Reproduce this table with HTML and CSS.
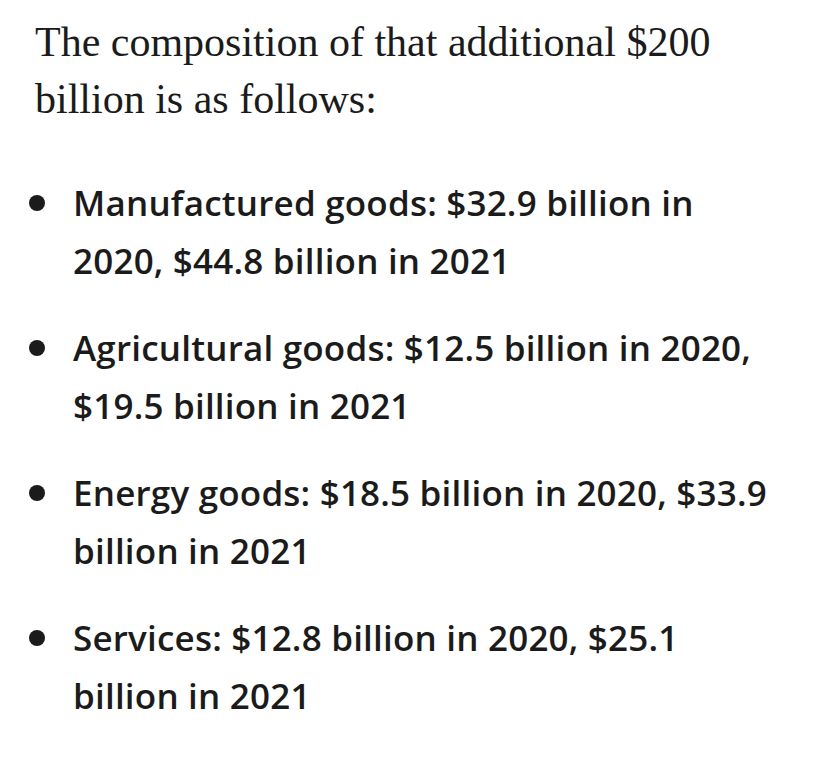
FILE: index.html
```html
<!DOCTYPE html>
<html lang="en">
<head>
<meta charset="utf-8">
<title>Composition</title>
<link rel="stylesheet" href="styles.css">
</head>
<body>
<main class="article">
  <p class="lead">The composition of that additional $200 billion is as follows:</p>
  <ul class="facts">
    <li class="fact"><span class="fact-text">Manufactured goods: $32.9 billion in<br>2020, $44.8 billion in 2021</span></li>
    <li class="fact"><span class="fact-text">Agricultural goods: $12.5 billion in 2020,<br>$19.5 billion in 2021</span></li>
    <li class="fact"><span class="fact-text">Energy goods: $18.5 billion in 2020, $33.9<br>billion in 2021</span></li>
    <li class="fact"><span class="fact-text">Services: $12.8 billion in 2020, $25.1<br>billion in 2021</span></li>
  </ul>
</main>
</body>
</html>
```

FILE: styles.css
```css
html, body {
  margin: 0;
  padding: 0;
  background: #ffffff;
}

.article {
  padding: 14px 20px 0 35px;
  color: #1b1b1b;
}

.lead {
  margin: 0;
  font-family: "Liberation Serif", "DejaVu Serif", serif;
  font-size: 42px;
  line-height: 57px;
  width: 720px;
}

.facts {
  list-style: none;
  margin: 46px 0 0 0;
  padding: 0;
  font-family: "Open Sans", "Liberation Sans", sans-serif;
  font-weight: 600;
  font-size: 35px;
  letter-spacing: 0.2px;
  line-height: 58px;
}

.fact {
  display: flex;
  align-items: flex-start;
  margin-bottom: 29px;
}

.fact::before {
  content: "";
  flex: 0 0 16px;
  width: 16px;
  height: 16px;
  border-radius: 50%;
  background: #1b1b1b;
  margin: 21px 28px 0 -6px;
}

.fact-text {
  width: 736px;
}
```
